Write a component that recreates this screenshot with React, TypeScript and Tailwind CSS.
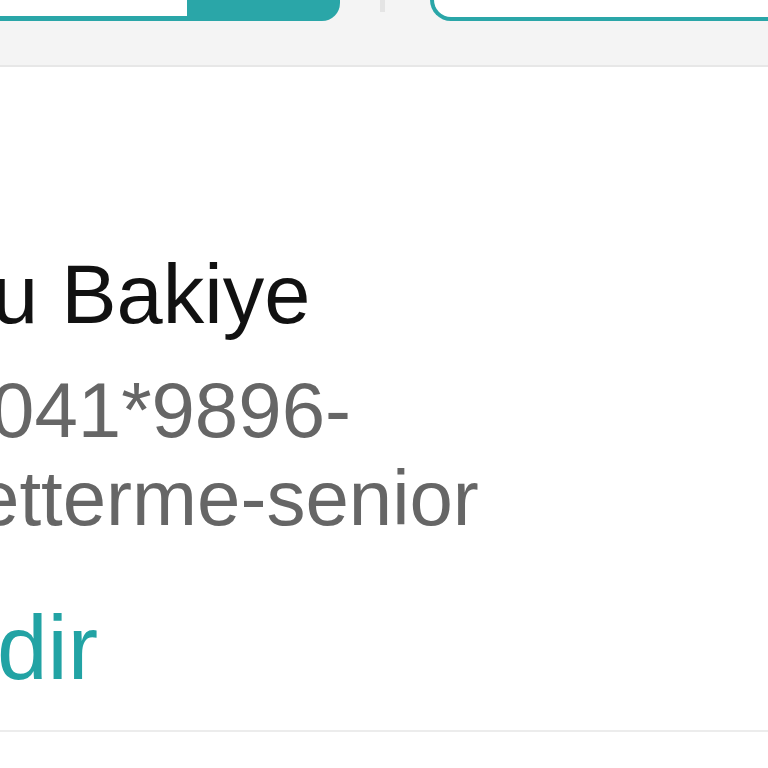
// App.tsx
// Parça görünüm: sekme başlığı + bakiye satırı (büyütülmüş)

const TEAL = '#22a3a4';

export default function App() {
  return (
    <div className="w-[768px] h-[768px] overflow-hidden bg-white font-['Liberation_Sans',Arial,sans-serif]">
      {/* ━━━ Header / tabs ━━━ */}
      <div className="flex items-start h-[67px] bg-[#f4f4f4] border-b-2 border-[#e7e7e7]">
        <div className="w-[187px] h-[21px] bg-white border-b-[5px] border-[#2aa6a8] shrink-0" />
        <div className="w-[153px] h-[21px] bg-[#2aa6a8] rounded-br-[18px] shrink-0" />
        <div className="ml-[40px] w-[5px] h-[12px] bg-[#e4e4e4] shrink-0" />
        <div className="ml-[45px] flex-1 h-[21px] bg-white border-b-[4px] border-l-[4px] border-[#2aa6a8] rounded-bl-[22px]" />
      </div>

      {/* ━━━ Balance row ━━━ */}
      <div className="flex flex-col">
        <div className="mt-[186px] ml-[-8px] text-[83px] leading-[83px] text-[#111111] whitespace-nowrap">
          u Bakiye
        </div>
        <div className="mt-[30px] text-[78px] leading-[88px] text-[#666666] whitespace-nowrap">
          <div className="ml-[-9px]">041*9896-</div>
          <div className="ml-[-24px]">etterme-senior</div>
        </div>
        <div
          className="mt-[60px] ml-[-3px] text-[91px] leading-[91px] whitespace-nowrap"
          style={{ color: TEAL }}
        >
          dir
        </div>
        <div className="mt-[37px] h-[2px] bg-[#ececec]" />
      </div>
    </div>
  );
}
